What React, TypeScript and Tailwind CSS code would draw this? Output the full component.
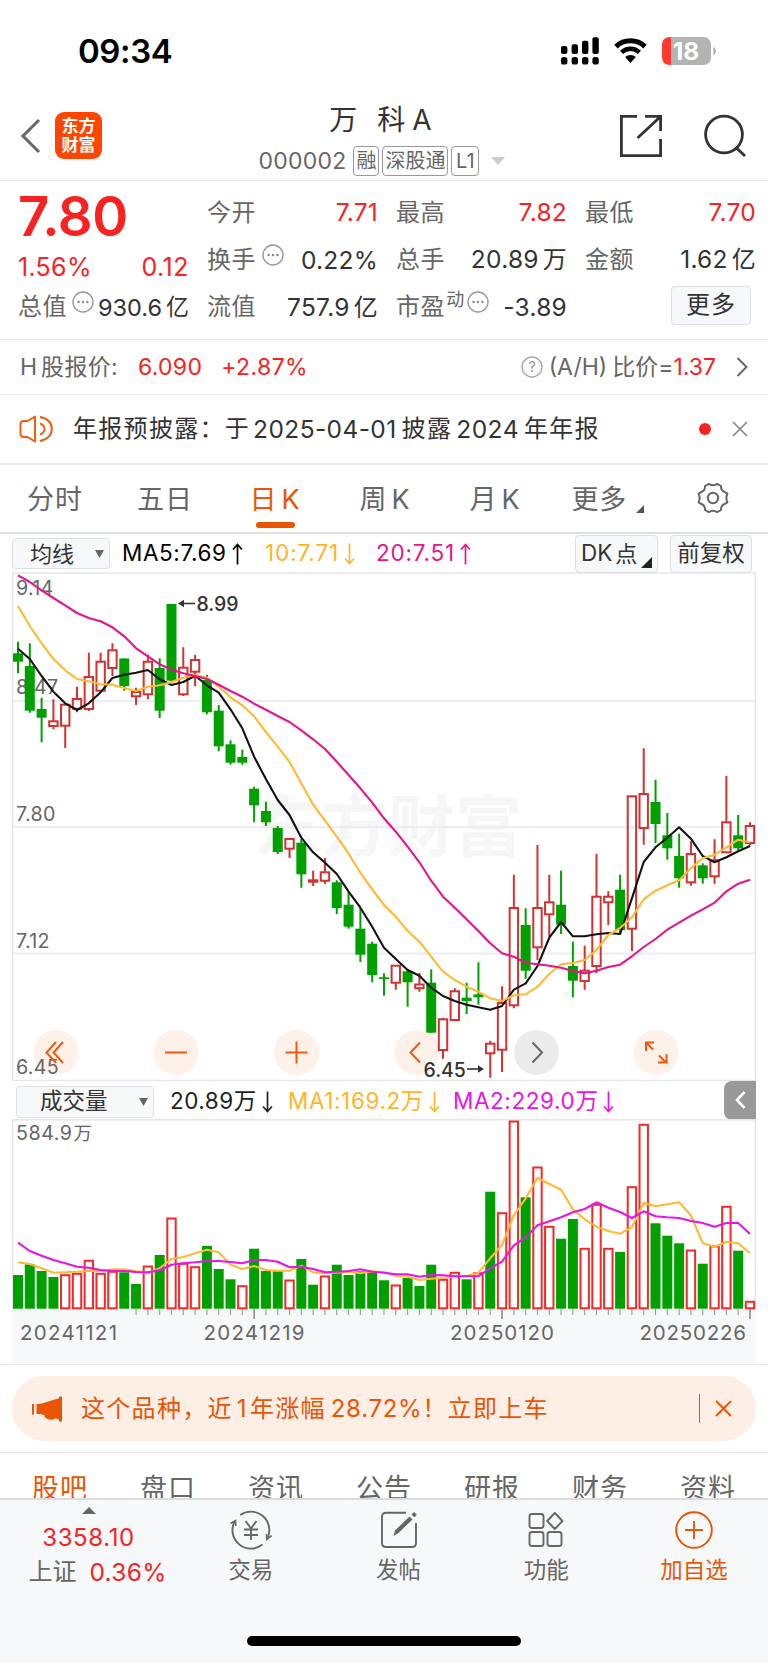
import type { ReactNode } from "react";

type Candle = [color: "r" | "g", high: number, top: number, bottom: number, low: number];

// y values are chart units, x comes from the index
const candles: Candle[] = [
  ["g", 641.7, 653.3, 661.7, 673.3], ["g", 643.3, 666, 710.7, 712.7], ["g", 697.7, 709, 717.7, 742.3],
  ["r", 699.3, 721.3, 726, 729.3], ["r", 704, 704.7, 725.7, 748], ["r", 686.7, 699, 708.7, 712.3],
  ["r", 652.7, 677, 709, 711], ["r", 652.7, 661.7, 690.7, 692], ["r", 643.3, 650.3, 668, 676],
  ["g", 658.3, 658.5, 686, 690.7], ["r", 687.7, 692, 696.3, 705], ["r", 654.7, 661.7, 694.3, 699.3],
  ["g", 658.3, 668, 710.7, 718], ["g", 604, 604, 680.7, 681.5], ["r", 647.3, 667.7, 694.3, 696],
  ["r", 654.7, 660, 671.7, 686.3], ["g", 675, 680, 712.3, 714.3], ["g", 705, 710.7, 746.3, 751.3],
  ["g", 740.3, 744.3, 762.7, 764.7], ["g", 749.7, 757, 762.7, 764.7], ["g", 786.7, 788.7, 805.3, 822.3],
  ["g", 801.7, 811, 822.3, 826], ["g", 826, 828, 852, 854], ["r", 838, 839, 848.7, 858],
  ["g", 839, 842.7, 874.3, 887.7], ["r", 870.7, 880.3, 881.7, 886], ["r", 858, 872.3, 880.7, 884],
  ["g", 880.3, 882.3, 908, 914], ["g", 891.7, 904.7, 926.7, 928.7], ["g", 908.3, 928.7, 954.7, 962],
  ["g", 941.7, 943.7, 975, 982.3], ["g", 973.3, 977.3, 979, 995.7], ["r", 965, 965.7, 982.7, 989.7],
  ["g", 970, 971.3, 982.3, 1006.7], ["r", 973, 984.5, 988.2, 991.7], ["g", 969.3, 982.7, 1032.7, 1032.7],
  ["r", 1018, 1019.3, 1050, 1058.7], ["r", 988.3, 991.3, 1020, 1021.3], ["g", 982.7, 997.7, 1001, 1014],
  ["g", 962.3, 994.3, 997.3, 1004.7], ["r", 1040.7, 1043.7, 1053.3, 1077.7], ["r", 986.3, 1003, 1049.7, 1072],
  ["r", 874.7, 908, 1005.3, 1008.3], ["g", 908.3, 925, 970.7, 978.7], ["r", 845, 908, 947.3, 960],
  ["r", 874.7, 902.3, 914.3, 936.7], ["g", 870.7, 904.7, 924.7, 934], ["g", 941.7, 966, 980.7, 997.3],
  ["r", 945.7, 970.7, 981, 989.7], ["r", 854, 896.7, 966, 973.3], ["r", 891.3, 896.7, 902.3, 925],
  ["g", 874.7, 889.7, 930, 934], ["r", 795.7, 796.3, 928.7, 951], ["r", 748.3, 794, 828, 844.7],
  ["g", 779.7, 802, 824, 843], ["g", 813, 835.3, 848.3, 859.7], ["g", 833.7, 856, 878.3, 887.7],
  ["r", 841.3, 854, 882.3, 885.7], ["g", 863.3, 865.3, 878.3, 883.7], ["r", 839.3, 860.3, 876.3, 883.7],
  ["r", 776, 822.3, 852.3, 853], ["g", 815, 835.3, 848.3, 850.3], ["r", 822.3, 826, 843, 845],
];

const ma5 = [
  648.7, 659, 676, 691.7, 703.3, 710, 703.3, 692.3, 678, 674.7, 672.7, 670, 679.3, 685, 682, 675.7, 685.3, 692.7,
  709.3, 728.3, 756.7, 779, 800, 815, 837.7, 852.3, 862.7, 874, 891.7, 907.7, 926.7, 947.7, 959, 970, 975.7, 987.7,
  996, 1001, 1004.7, 1007.3, 1009.7, 1006, 989.7, 983.3, 966, 937.7, 922, 936.3, 936.3, 934.3, 933, 934, 898.3, 862,
  847.3, 837.7, 827.3, 838.7, 856, 862.3, 857.3, 851.3, 846,
];

const ma10 = [
  606, 626, 643.3, 659, 670.3, 679, 681.3, 684.3, 684.7, 688, 691, 686.7, 685.3, 682, 677.7, 674.7, 677.7, 686.7,
  697.3, 705.3, 716.3, 732, 746.7, 762, 783.3, 804.7, 820.7, 836.7, 853.7, 872.7, 889.3, 905, 916.7, 930.7, 941.7,
  956.7, 971.7, 980, 986.7, 991.7, 998.3, 1001, 995.3, 994.3, 986.7, 974, 964.3, 963, 960, 950, 935, 928, 917.3,
  899.3, 890.7, 885.3, 880.3, 868.3, 858.3, 854.7, 847.3, 839.7, 842.3,
];

const ma20 = [
  575.3, 582, 590.3, 598, 605.3, 613, 618, 621.3, 627.3, 636.3, 648.3, 656.3, 664.3, 669.7, 673.3, 676, 679, 684.7,
  691, 696.7, 703.7, 709.7, 716, 722, 730.3, 739.3, 749, 761.7, 775, 788.3, 802.7, 818.3, 831.7, 846.7, 862.3, 880.7,
  896.7, 907.7, 919.3, 931, 943.3, 953.3, 956.7, 962.7, 964.3, 965.7, 967.7, 971, 973.3, 970.7, 967, 964.7, 956.3,
  947, 939, 929.7, 922.7, 915.7, 909.3, 902.7, 891.3, 883.7, 879.7,
];

const volumes: ["r" | "g", number][] = [
  ["g", 1275], ["g", 1264.3], ["g", 1271], ["g", 1277], ["r", 1274.7], ["r", 1273.3], ["r", 1260.3], ["r", 1273.3],
  ["r", 1271.3], ["g", 1272.3], ["g", 1284], ["r", 1266], ["g", 1255], ["r", 1218], ["r", 1263.3], ["r", 1266.7],
  ["g", 1246], ["g", 1269], ["g", 1279.3], ["r", 1285.7], ["g", 1248.7], ["g", 1271], ["g", 1271.3], ["r", 1280],
  ["g", 1259], ["g", 1284.7], ["r", 1276], ["g", 1264.7], ["g", 1275], ["g", 1271.3], ["g", 1272.3], ["g", 1280.3],
  ["r", 1285], ["g", 1278], ["g", 1286], ["g", 1264.7], ["r", 1279.3], ["r", 1272.3], ["g", 1279.3], ["r", 1272.7],
  ["g", 1191.7], ["r", 1212.7], ["r", 1121], ["g", 1197.3], ["r", 1167], ["r", 1226.3], ["g", 1238.7], ["g", 1219],
  ["r", 1248.3], ["r", 1204.3], ["r", 1248.3], ["g", 1252], ["r", 1186.7], ["r", 1124.3], ["g", 1223.3],
  ["g", 1235.7], ["g", 1243.3], ["r", 1250], ["g", 1263.7], ["r", 1246], ["r", 1206.3], ["g", 1250.7], ["r", 1301.3],
];

const volMa1 = [
  1262.3, 1264, 1268.3, 1272.7, 1272.3, 1271.7, 1270.7, 1271.3, 1269.3, 1269.3, 1271.3, 1273, 1268.3, 1259, 1257,
  1253.3, 1249.7, 1252.3, 1264.7, 1269, 1266, 1270, 1270.7, 1270.7, 1265.7, 1272.3, 1273.3, 1272.7, 1271.7, 1273.3,
  1271.3, 1272.3, 1275.7, 1276.7, 1280, 1278.7, 1278, 1276, 1276, 1272.7, 1258.3, 1245, 1215, 1198.3, 1178, 1184,
  1189.7, 1209.3, 1219.3, 1226.7, 1231, 1233.7, 1227.3, 1202.7, 1206.3, 1204.3, 1202.3, 1215.3, 1243, 1247, 1241.7,
  1243.3, 1253.3,
];

const volMa2 = [
  1242.7, 1251, 1255.7, 1260, 1263.3, 1266.7, 1267.7, 1270, 1271, 1271, 1272, 1272.3, 1270.3, 1264.7, 1263.3, 1262.3,
  1261, 1261, 1262, 1263.3, 1260, 1260, 1261.7, 1267.3, 1266.7, 1269, 1272.3, 1271.7, 1271, 1269.3, 1271.7, 1272.7,
  1274.3, 1274.3, 1276.7, 1275, 1275.3, 1276.3, 1276.3, 1276.3, 1268.3, 1261.7, 1245.3, 1237.3, 1225.3, 1221.3,
  1217.3, 1212.3, 1209, 1202.3, 1207.7, 1212, 1218, 1211.3, 1216.3, 1217.3, 1218, 1221, 1223, 1226.7, 1223, 1223,
  1234,
];

const xAt = (i: number) => 18 + i * 11.806;
const toPoints = (ys: number[]) => ys.map((y, i) => `${xAt(i).toFixed(1)},${y}`).join(" ");

const Dots = () => (
  <svg width="22" height="22" viewBox="0 0 22 22" className="shrink-0">
    <circle cx="11" cy="11" r="10" fill="none" stroke="#999" strokeWidth="1.4" />
    <circle cx="6.6" cy="11" r="1.2" fill="#888" />
    <circle cx="11" cy="11" r="1.2" fill="#888" />
    <circle cx="15.4" cy="11" r="1.2" fill="#888" />
  </svg>
);

const StatusBar = () => (
  <div className="flex h-[101px] items-center justify-between pl-[78px] pr-[52px]">
    <span className="text-[33px] font-semibold leading-none text-black tracking-[-0.4px] mt-[2px]">09:34</span>
    <div className="flex items-center gap-[15px]">
      <svg width="38" height="28" viewBox="0 0 38 28">
        <rect x="0" y="9" width="6.4" height="8" rx="2" />
        <rect x="10.6" y="7.2" width="6.4" height="9.8" rx="2" />
        <rect x="21" y="3.8" width="6.4" height="13.2" rx="2" />
        <rect x="31.4" y="0.3" width="6.4" height="16.7" rx="2" />
        <rect x="0" y="20" width="6.4" height="7.6" rx="2.6" />
        <rect x="10.6" y="20" width="6.4" height="7.6" rx="2.6" />
        <rect x="21" y="20" width="6.4" height="7.6" rx="2.6" />
        <rect x="31.4" y="20" width="6.4" height="7.6" rx="2.6" />
      </svg>
      <svg width="33" height="26" viewBox="0 0 33 26">
        <path d="M2 8.6 C10 0.9 23 0.9 31 8.6" fill="none" stroke="#000" strokeWidth="5" />
        <path d="M7.6 14.4 C12.6 9.6 20.4 9.6 25.4 14.4" fill="none" stroke="#000" strokeWidth="4.6" />
        <path d="M11.2 19 C14.2 16.2 18.8 16.2 21.8 19 L16.5 25 Z" />
      </svg>
      <svg width="54" height="28" viewBox="0 0 54 28">
        <path d="M8 0 H9 V28 H8 C3 28 0 25 0 20 V8 C0 3 3 0 8 0 Z" fill="#ff3b30" />
        <path d="M9 0 H41 C46 0 49 3 49 8 V20 C49 25 46 28 41 28 H9 Z" fill="#b3b3b3" />
        <path d="M51.3 9.5 Q54 11 54 14 Q54 17 51.3 18.5 Z" fill="#b3b3b3" />
        <text x="24" y="22.8" textAnchor="middle" fontSize="24.5" fontWeight="700" fill="#fff">18</text>
      </svg>
    </div>
  </div>
);

const Header = () => (
  <header className="flex h-[80px] justify-between border-b border-[#eaeaee] pl-5 pr-[21px]">
    <div className="flex w-[150px] items-start gap-[14px] pt-[11px]">
      <svg width="21" height="36" viewBox="0 0 21 36" className="mt-[6px]">
        <path d="M19 2 L3 18 L19 34" fill="none" stroke="#666" strokeWidth="3" />
      </svg>
      <div className="flex h-[47px] w-[47px] flex-col items-center justify-center rounded-[9px] bg-[#ff4502] text-[17px] font-bold leading-[19px] text-white">
        <span>东方</span>
        <span>财富</span>
      </div>
    </div>
    <div className="flex flex-col items-center pr-[26px]">
      <div className="-ml-[2px] mt-[1px] flex h-[36px] items-center text-[28px] leading-[36px] text-[#333]">
        <span>万</span>
        <span className="ml-[20px]">科</span>
        <span className="ml-[7px]">A</span>
      </div>
      <div className="ml-[1px] mt-[8px] flex h-[30px] items-center text-[#666]">
        <span className="mr-[7px] text-[23px] tracking-[0.2px]">000002</span>
        <span className="mr-[3px] flex h-[30px] w-[26px] items-center justify-center rounded-[4px] border-[1.5px] border-[#999] text-[20px]">融</span>
        <span className="mr-[3px] flex h-[30px] w-[66px] items-center justify-center rounded-[4px] border-[1.5px] border-[#999] text-[20px]">深股通</span>
        <span className="flex h-[30px] w-[28px] items-center justify-center rounded-[4px] border-[1.5px] border-[#999] text-[20px]">L1</span>
        <svg width="14" height="8" viewBox="0 0 14 8" className="ml-3">
          <path d="M0 0 H14 L7 8 Z" fill="#ccc" />
        </svg>
      </div>
    </div>
    <div className="flex w-[128px] items-start gap-[40px] pt-[13px]">
      <svg width="44" height="44" viewBox="0 0 44 44" fill="none" stroke="#333" strokeWidth="2.8">
        <path d="M18 2.4 H2.4 V41.6 H41.6 V25" />
        <path d="M26 2.4 H41.6 V17 M41.6 2.4 L18.5 24" />
      </svg>
      <svg width="44" height="44" viewBox="0 0 44 44" fill="none" stroke="#333" strokeWidth="2.8">
        <circle cx="21" cy="20.5" r="18.4" />
        <path d="M32.5 33 L42 42" />
      </svg>
    </div>
  </header>
);

const Stat = ({ label, value, up, children }: { label: string; value?: string; up?: boolean; children?: ReactNode }) => {
  const unit = value && /[万亿]$/.test(value) ? value.slice(-1) : "";
  return (
    <div className="flex h-[47.3px] items-center justify-between whitespace-nowrap leading-none">
      <span className="-ml-[1px] flex items-center text-[24px] tracking-[0.6px] text-[#666]">
        {label}
        {children}
      </span>
      {value && (
        <span className={`-mr-[1px] text-[24.5px] tracking-[0.25px] ${up ? "text-[#f82222]" : "text-[#333]"}`}>
          {unit ? value.slice(0, -1) : value}
          {unit && <span className="ml-[4px] text-[24px]">{unit}</span>}
        </span>
      )}
    </div>
  );
};

const Quote = () => (
  <section className="grid h-[159px] grid-cols-4 gap-x-5 border-b border-[#eaeaee] pl-[19px] pr-[13px] pt-2">
    <div className="leading-none text-[#f82222]">
      <div className="-ml-[1px] flex h-[54px] items-center text-[54.5px] font-semibold tracking-[-0.4px]">7.80</div>
      <div className="flex h-[40px] items-center justify-between pt-[8px] text-[25px]">
        <span className="-ml-[1px] tracking-[0.3px]">1.56%</span>
        <span className="-mr-[1px] tracking-[0.5px]">0.12</span>
      </div>
      <div className="flex h-[47.3px] items-center justify-between whitespace-nowrap">
        <span className="-ml-[1px] flex items-center text-[24px] tracking-[0.6px] text-[#666]">
          总值
          <span className="-mt-[10px] ml-[5px]"><Dots /></span>
        </span>
        <span className="-mr-[1px] flex items-center pt-[2px] text-[23.5px] text-[#333]">
          930.6<span className="ml-[4px] text-[23px]">亿</span>
        </span>
      </div>
    </div>
    <div>
      <Stat label="今开" value="7.71" up />
      <Stat label="换手" value="0.22%">
        <span className="-mt-[10px] ml-[6px]"><Dots /></span>
      </Stat>
      <Stat label="流值" value="757.9亿" />
    </div>
    <div>
      <Stat label="最高" value="7.82" up />
      <Stat label="总手" value="20.89万" />
      <Stat label="市盈" value="-3.89">
        <span className="-mt-[14px] ml-[1px] text-[18px]">动</span>
        <span className="-mt-[10px] ml-[2px]"><Dots /></span>
      </Stat>
    </div>
    <div>
      <Stat label="最低" value="7.70" up />
      <Stat label="金额" value="1.62亿" />
      <div className="mr-1 mt-[2px] flex justify-end">
        <button className="h-[39px] w-[80px] rounded-[4px] border border-[#dcdfe6] bg-[#f7f8fa] text-[24px] leading-none tracking-[1px] text-[#333]">更多</button>
      </div>
    </div>
  </section>
);

const HShareRow = () => (
  <section className="flex h-[55px] items-center justify-between border-b border-[#eaeaee] pl-5 pr-5 text-[23px] leading-none">
    <div className="flex items-center text-[#666]">
      <span>H</span>
      <span className="ml-[4px] tracking-[0.3px]">股报价:</span>
      <span className="ml-[20px] tracking-[0.3px] text-[#f82222]">6.090</span>
      <span className="ml-[19px] tracking-[0.4px] text-[#f82222]">+2.87%</span>
    </div>
    <div className="flex items-center text-[#666]">
      <svg width="22" height="22" viewBox="0 0 22 22" className="mr-[6px]">
        <circle cx="11" cy="11" r="10" fill="none" stroke="#aaa" strokeWidth="1.4" />
        <text x="11" y="16.3" textAnchor="middle" fontSize="15" fill="#999">?</text>
      </svg>
      <span>(A/H)</span>
      <span className="ml-[5px]">比价=</span>
      <span className="text-[#f82222]">1.37</span>
      <svg width="12" height="20" viewBox="0 0 12 20" className="ml-[20px]">
        <path d="M1.5 1 L10.5 10 L1.5 19" fill="none" stroke="#666" strokeWidth="2" />
      </svg>
    </div>
  </section>
);

const Notice = () => (
  <section className="flex h-[70px] items-center border-b-2 border-[#ededf0] pl-[19px] pr-5 leading-none text-[#333]">
    <svg width="34" height="28" viewBox="0 0 34 28" fill="none" stroke="#f05a0a" strokeWidth="1.9" strokeLinejoin="round">
      <path d="M16 1.5 L8.5 6 H5 Q1.5 6 1.5 9 V19 Q1.5 22 5 22 H8.5 L16 26.5 Z" />
      <path d="M21 8.4 Q25.5 10.4 25.5 14 Q25.5 17.6 21 19.6" />
      <path d="M21 2 Q32.8 4.5 32.8 14 Q32.8 23.5 21 26" />
    </svg>
    <div className="ml-5 flex items-center whitespace-nowrap text-[24px]">
      <span className="tracking-[1.3px]">年报预披露：于</span>
      <span className="ml-[3px] text-[24.5px] tracking-[0.4px]">2025-04-01</span>
      <span className="ml-[5px] tracking-[1.3px]">披露</span>
      <span className="ml-[4px] text-[24.5px] tracking-[0.5px]">2024</span>
      <span className="ml-[5px] tracking-[1.3px]">年年报</span>
    </div>
    <span className="ml-auto h-3 w-3 rounded-full bg-[#f82222]" />
    <svg width="16" height="16" viewBox="0 0 16 16" className="ml-[21px]">
      <path d="M1 1 L15 15 M15 1 L1 15" stroke="#888" strokeWidth="1.7" />
    </svg>
  </section>
);

const periods = ["分时", "五日", "日K", "周K", "月K"];

const PeriodTabs = () => (
  <nav className="flex h-[69px] items-start border-b-2 border-[#dcdfe6] text-[27px] leading-none text-[#666]">
    {periods.map((p) => {
      const active = p === "日K";
      return (
        <div key={p} className={`flex w-[110px] flex-col items-center pt-5 ${active ? "text-[#ea5504]" : ""}`}>
          <span className="flex h-[28px] items-center whitespace-nowrap tracking-[1px]">
            {p[0]}
            <span className={p[1] === "K" ? "ml-[4px]" : ""}>{p[1]}</span>
          </span>
          {active && <span className="mt-[9px] h-[6px] w-[39px] rounded-full bg-[#ea5504]" />}
        </div>
      );
    })}
    <div className="flex w-[94px] items-end justify-end pt-5">
      <span className="flex h-[28px] items-center tracking-[0.8px]">更多</span>
      <svg width="8" height="8" viewBox="0 0 8 8" className="ml-[9px]">
        <path d="M8 0 V8 H0 Z" fill="#555" />
      </svg>
    </div>
    <svg width="34" height="34" viewBox="0 0 34 34" className="ml-[52px] mt-[16px]" fill="none" stroke="#666" strokeWidth="2" strokeLinejoin="round">
      <path d="M12.8 2.8 Q17 5.6 21.2 2.8 L25 5 Q24.8 9.6 29 11.2 L31.4 12.6 Q29.4 17 31.4 21.4 L29 22.8 Q24.8 24.4 25 29 L21.2 31.2 Q17 28.4 12.8 31.2 L9 29 Q9.2 24.4 5 22.8 L2.6 21.4 Q4.6 17 2.6 12.6 L5 11.2 Q9.2 9.6 9 5 Z" />
      <circle cx="17" cy="17" r="5.2" />
    </svg>
  </nav>
);

const Arrow = ({ down }: { down?: boolean }) => (
  <svg width="11" height="22" viewBox="0 0 11 22" className="ml-[5px]" fill="none" stroke="currentColor" strokeWidth="1.7">
    {down ? <path d="M5.5 0.5 V20.5 M1 15.5 L5.5 20.5 L10 15.5" /> : <path d="M5.5 21.5 V1.5 M1 6.5 L5.5 1.5 L10 6.5" />}
  </svg>
);

const MaToolbar = () => (
  <div className="flex h-[38px] items-center whitespace-nowrap pl-3 pr-[16px] pt-[1px] text-[22.5px] leading-none">
    <div className="flex h-[31px] w-[98px] items-center justify-between rounded-[4px] border border-[#dcdfe6] bg-[#f7f8fa] pl-[17px] pr-[5px] text-[22px] text-[#333]">
      均线
      <svg width="9" height="8" viewBox="0 0 9 8"><path d="M0 0 H9 L4.5 8 Z" fill="#666" /></svg>
    </div>
    <span className="ml-3 flex w-[143px] items-center tracking-[0.6px] text-black">MA5:7.69<Arrow /></span>
    <span className="flex w-[111px] items-center tracking-[0.9px] text-[#ffb428]">10:7.71<Arrow down /></span>
    <span className="flex items-center tracking-[0.8px] text-[#e6148c]">20:7.51<Arrow /></span>
    <div className="relative ml-auto flex h-[38px] w-[83px] items-center rounded-[4px] border border-[#dcdfe6] bg-[#f7f8fa] pl-[5px] text-[#333]">
      DK<span className="ml-[3px] text-[22px]">点</span>
      <svg width="11" height="11" viewBox="0 0 11 11" className="absolute bottom-[4px] right-[5px]"><path d="M11 0 V11 H0 Z" fill="#222" /></svg>
    </div>
    <div className="ml-3 flex h-[38px] w-[82px] items-center justify-center rounded-[4px] border border-[#dcdfe6] bg-[#f7f8fa] text-[22.5px] text-[#333]">前复权</div>
  </div>
);

const controls: { name: string; cx: number; path: string; off?: boolean }[] = [
  { name: "first", cx: 56, path: "M0 -10.5 L-9.5 0 L0 10.5 M7 -10.5 L-2.5 0 L7 10.5" },
  { name: "zoomOut", cx: 176, path: "M-11 0 H11" },
  { name: "zoomIn", cx: 296.5, path: "M-11 0 H11 M0 -11 V11" },
  { name: "prev", cx: 417, path: "M3 -10 L-6.5 0 L3 10" },
  { name: "next", cx: 536.5, path: "M-4 -10 L5.5 0 L-4 10", off: true },
  { name: "full", cx: 656, path: "M-10 -1.5 V-10 H-2 M-10 -10 L-3 -3 M10.5 1.5 V10 H2 M10 10 L3 3" },
];

const KLineChart = () => (
  <svg width="744" height="509" viewBox="12 572 744 509" className="ml-3 block overflow-hidden">
    <rect x="12.75" y="573" width="742.5" height="507.5" fill="#fff" stroke="#e6e6ea" strokeWidth="1.5" />
    <text x="388" y="851" textAnchor="middle" fontSize="67" fontWeight="700" fill="#f6f6f6" textLength="268">东方财富</text>
    {[701, 827, 953.5].map((y) => (
      <path key={y} d={`M12 ${y} H756`} stroke="#ececf2" strokeWidth="1.8" />
    ))}
    {controls.map((c) => (
      <circle key={c.name} cx={c.cx} cy="1052.5" r="22.5" fill={c.off ? "#ebebeb" : "#fef1ea"} />
    ))}
    <g fontSize="19.7" fill="#666" letterSpacing="0.3">
      <text x="16" y="594.5">9.14</text>
      <text x="16" y="694">8.47</text>
      <text x="16" y="820.5">7.80</text>
      <text x="16" y="947.5">7.12</text>
      <text x="16" y="1074">6.45</text>
    </g>
    {candles.map(([color, high, top, bottom, low], i) => {
      const x = xAt(i);
      if (color === "g") {
        return (
          <g key={i} fill="#00a000">
            <rect x={x - 1} y={high} width="2" height={low - high} />
            <rect x={x - 5} y={top} width="10" height={bottom - top} />
          </g>
        );
      }
      return (
        <g key={i} stroke="#d23232" strokeWidth="2" fill="none">
          <path d={`M${x} ${high} V${top} M${x} ${bottom} V${low}`} />
          <rect x={x - 4.2} y={top} width="8.4" height={bottom - top} />
        </g>
      );
    })}
    <g fill="none" strokeWidth="2.1" strokeLinejoin="round">
      <polyline points={toPoints(ma5)} stroke="#111" />
      <polyline points={toPoints(ma10)} stroke="#ffb932" />
      <polyline points={toPoints(ma20)} stroke="#e6148c" />
    </g>
    <g fill="none" strokeWidth="2">
      {controls.map((c) => (
        <path key={c.name} d={c.path} transform={`translate(${c.cx} 1052.5)`} stroke={c.off ? "#666" : "#f05a0a"} />
      ))}
    </g>
    <g fontSize="19.5" fontWeight="500" fill="#333">
      <path d="M182 603.5 H195" stroke="#333" strokeWidth="1.6" />
      <path d="M178 603.5 L184 599.7 V607.3 Z" />
      <text x="196.5" y="611.3">8.99</text>
      <text x="423.5" y="1076.5">6.45</text>
      <path d="M467 1069 H480" stroke="#333" strokeWidth="1.6" />
      <path d="M484 1069 L478 1065.2 V1072.8 Z" />
    </g>
  </svg>
);

const VolumeToolbar = () => (
  <div className="flex h-[38px] items-center whitespace-nowrap pl-[16px] pr-3 pt-[3px] text-[22.5px] leading-none">
    <div className="flex h-[32px] w-[138px] items-center justify-between rounded-[4px] border border-[#dcdfe6] bg-[#f7f8fa] pl-[23px] pr-[5px] text-[#333]">
      成交量
      <svg width="9" height="8" viewBox="0 0 9 8"><path d="M0 0 H9 L4.5 8 Z" fill="#666" /></svg>
    </div>
    <span className="ml-[16px] flex w-[118px] items-center tracking-[0.5px] text-[#222]">20.89万<Arrow down /></span>
    <span className="flex w-[165px] items-center tracking-[0.6px] text-[#ffb428]">MA1:169.2万<Arrow down /></span>
    <span className="flex items-center tracking-[0.6px] text-[#e614e6]">MA2:229.0万<Arrow down /></span>
    <div className="-mt-[3px] ml-auto flex h-[39px] w-[32px] items-center justify-center rounded-l-[8px] bg-[#999]">
      <svg width="11" height="18" viewBox="0 0 11 18"><path d="M9.5 1 L2 9 L9.5 17" fill="none" stroke="#fff" strokeWidth="2.6" /></svg>
    </div>
  </div>
);

const VolumeChart = () => (
  <svg width="744" height="245" viewBox="12 1119 744 245" className="ml-3 block overflow-hidden">
    <rect x="12.75" y="1119.75" width="742.5" height="200" fill="#fff" stroke="#e6e6ea" strokeWidth="1.5" />
    <rect x="12" y="1309" width="744" height="55" fill="#f7f8fa" />
    <text x="16" y="1140.3" fontSize="19.7" fill="#666" letterSpacing="0.5">584.9</text>
    <text x="73.5" y="1140" fontSize="18.5" fill="#666">万</text>
    {volumes.map(([color, y], i) =>
      color === "g" ? (
        <rect key={i} x={xAt(i) - 5} y={y} width="10" height={1308.7 - y} fill="#00a000" />
      ) : (
        <rect key={i} x={xAt(i) - 4.2} y={y + 0.5} width="8.4" height={1307.8 - y} fill="#fff" stroke="#f52828" strokeWidth="2" />
      )
    )}
    <g fill="none" strokeWidth="2.1" strokeLinejoin="round">
      <polyline points={toPoints(volMa1)} stroke="#ffb932" />
      <polyline points={toPoints(volMa2)} stroke="#e614e6" />
    </g>
    {volumes.map((_, i) => {
      if (i < 10) return null;
      const major = i === 20 || i === 41 || i === 62;
      return <path key={i} d={`M${xAt(i)} 1309 V${major ? 1319 : 1315}`} stroke="#999" strokeWidth={major ? 1.8 : 1.1} />;
    })}
    <g fontSize="20.5" fill="#666">
      <text x="20" y="1340" textLength="97">20241121</text>
      <text x="203.5" y="1340" textLength="101">20241219</text>
      <text x="450" y="1340" textLength="104">20250120</text>
      <text x="639.5" y="1340" textLength="106.5">20250226</text>
    </g>
  </svg>
);

const Banner = () => (
  <section className="h-[89px] border-y border-[#e6e6ea] px-3 pt-[11px]">
    <div className="flex h-[65px] items-center rounded-full bg-[#fdeee6] pl-5 pr-6 text-[24px] leading-none text-[#ea5504]">
      <svg width="31" height="26" viewBox="0 0 31 26" fill="#ea5504">
        <rect x="0" y="8" width="2" height="10.5" />
        <path d="M4.5 8 H8 L27 2.2 V0.5 H30 V25.5 H27 V23.4 L23 22.2 Q21 24.5 17 23.5 Q12.5 22.5 12.3 19 L8 18 H4.5 Z" />
      </svg>
      <div className="ml-[18px] flex items-center whitespace-nowrap pt-[1px] tracking-[1.3px]">
        <span>这个品种，近</span>
        <span className="ml-[4px]">1</span>
        <span className="ml-[2px]">年涨幅</span>
        <span className="ml-[5px] tracking-[0.7px]">28.72%</span>
        <span>！立即上车</span>
      </div>
      <span className="ml-auto h-[29px] w-[1.5px] bg-[#ea5504]" />
      <svg width="17" height="17" viewBox="0 0 17 17" className="ml-[15px]">
        <path d="M1 1 L16 16 M16 1 L1 16" stroke="#ea5504" strokeWidth="1.8" />
      </svg>
    </div>
  </section>
);

const infoTabs = ["股吧", "盘口", "资讯", "公告", "研报", "财务", "资料"];

const InfoTabs = () => (
  <nav className="flex h-[45px] overflow-hidden pl-[6px] pt-[22px] text-[27px] leading-[28px] tracking-[1px] text-[#666]">
    {infoTabs.map((t, i) => (
      <span key={t} className={`w-[108px] shrink-0 text-center ${i === 0 ? "text-[#ea5504]" : ""}`}>{t}</span>
    ))}
  </nav>
);

const actions: { label: string; active?: boolean; icon: ReactNode }[] = [
  {
    label: "交易",
    icon: (
      <>
        <path d="M10.2 5 A18.5 18.5 0 0 1 37.8 27.5 M32.5 34.6 A18.5 18.5 0 0 1 4.6 11.5" />
        <path d="M0.5 13.5 L5.6 10.5 L5.8 16 M41.6 25.5 L36.8 29.4 L36.4 24" strokeWidth="1.5" />
        <path d="M15.5 11 L21 18.5 L26.5 11 M21 18.5 V30 M14 19.5 H28 M14 25 H28" />
      </>
    ),
  },
  {
    label: "发帖",
    icon: (
      <>
        <path d="M28 2.8 H8 Q4 2.8 4 6.8 V33 Q4 37 8 37 H34 Q38 37 38 33 V13" />
        <path d="M15.5 26 L17 20.5 L31.5 6.5 L34.5 9.5 L20.5 23 Z" fill="currentColor" stroke="none" />
        <path d="M33.5 4.5 L36 2 L38.8 4.8 L36.3 7.3 Z" fill="currentColor" stroke="none" />
      </>
    ),
  },
  {
    label: "功能",
    icon: (
      <>
        <rect x="4.5" y="4" width="14" height="14" rx="2.5" />
        <rect x="4.5" y="22" width="14" height="14" rx="2.5" />
        <rect x="22.5" y="22" width="14" height="14" rx="2.5" />
        <path d="M29.8 3 L37.5 11 L29.8 19 L22.2 11 Z" strokeLinejoin="round" />
      </>
    ),
  },
  {
    label: "加自选",
    active: true,
    icon: (
      <>
        <circle cx="21" cy="20" r="17.8" />
        <path d="M12 20 H30 M21 11 V29" />
      </>
    ),
  },
];

const BottomBar = () => (
  <footer className="flex h-[166px] flex-col border-t-2 border-[#dcdce0] bg-[#f7f8fa] leading-none">
    <div className="flex h-[91px] text-[#666]">
      <div className="flex w-[177px] flex-col items-center pt-[7px]">
        <svg width="14" height="7" viewBox="0 0 14 7"><path d="M7 0 L14 7 H0 Z" fill="#666" /></svg>
        <span className="mt-[12px] text-[24px] tracking-[0.6px] text-[#f82222]">3358.10</span>
        <div className="mt-[10px] flex items-center pl-[18px]">
          <span className="text-[24px]">上证</span>
          <span className="ml-[13px] text-[24.5px] tracking-[0.3px] text-[#f82222]">0.36%</span>
        </div>
      </div>
      {actions.map((a) => (
        <div key={a.label} className={`flex w-[147.7px] flex-col items-center pt-[10px] ${a.active ? "text-[#ea5504]" : ""}`}>
          <svg width="42" height="40" viewBox="0 0 42 40" fill="none" stroke="currentColor" strokeWidth="1.9">{a.icon}</svg>
          <span className="mt-[9px] text-[22.5px]">{a.label}</span>
        </div>
      ))}
    </div>
    <span className="mx-auto mt-[45px] h-[10px] w-[274px] rounded-full bg-black" />
  </footer>
);

const App = () => {
  return (
    <div className="h-[1663px] w-[768px] overflow-hidden bg-white font-['Inter','Noto_Sans_CJK_SC',sans-serif]">
      <StatusBar />
      <Header />
      <Quote />
      <HShareRow />
      <Notice />
      <PeriodTabs />
      <MaToolbar />
      <KLineChart />
      <VolumeToolbar />
      <VolumeChart />
      <Banner />
      <InfoTabs />
      <BottomBar />
    </div>
  );
};

export default App;
